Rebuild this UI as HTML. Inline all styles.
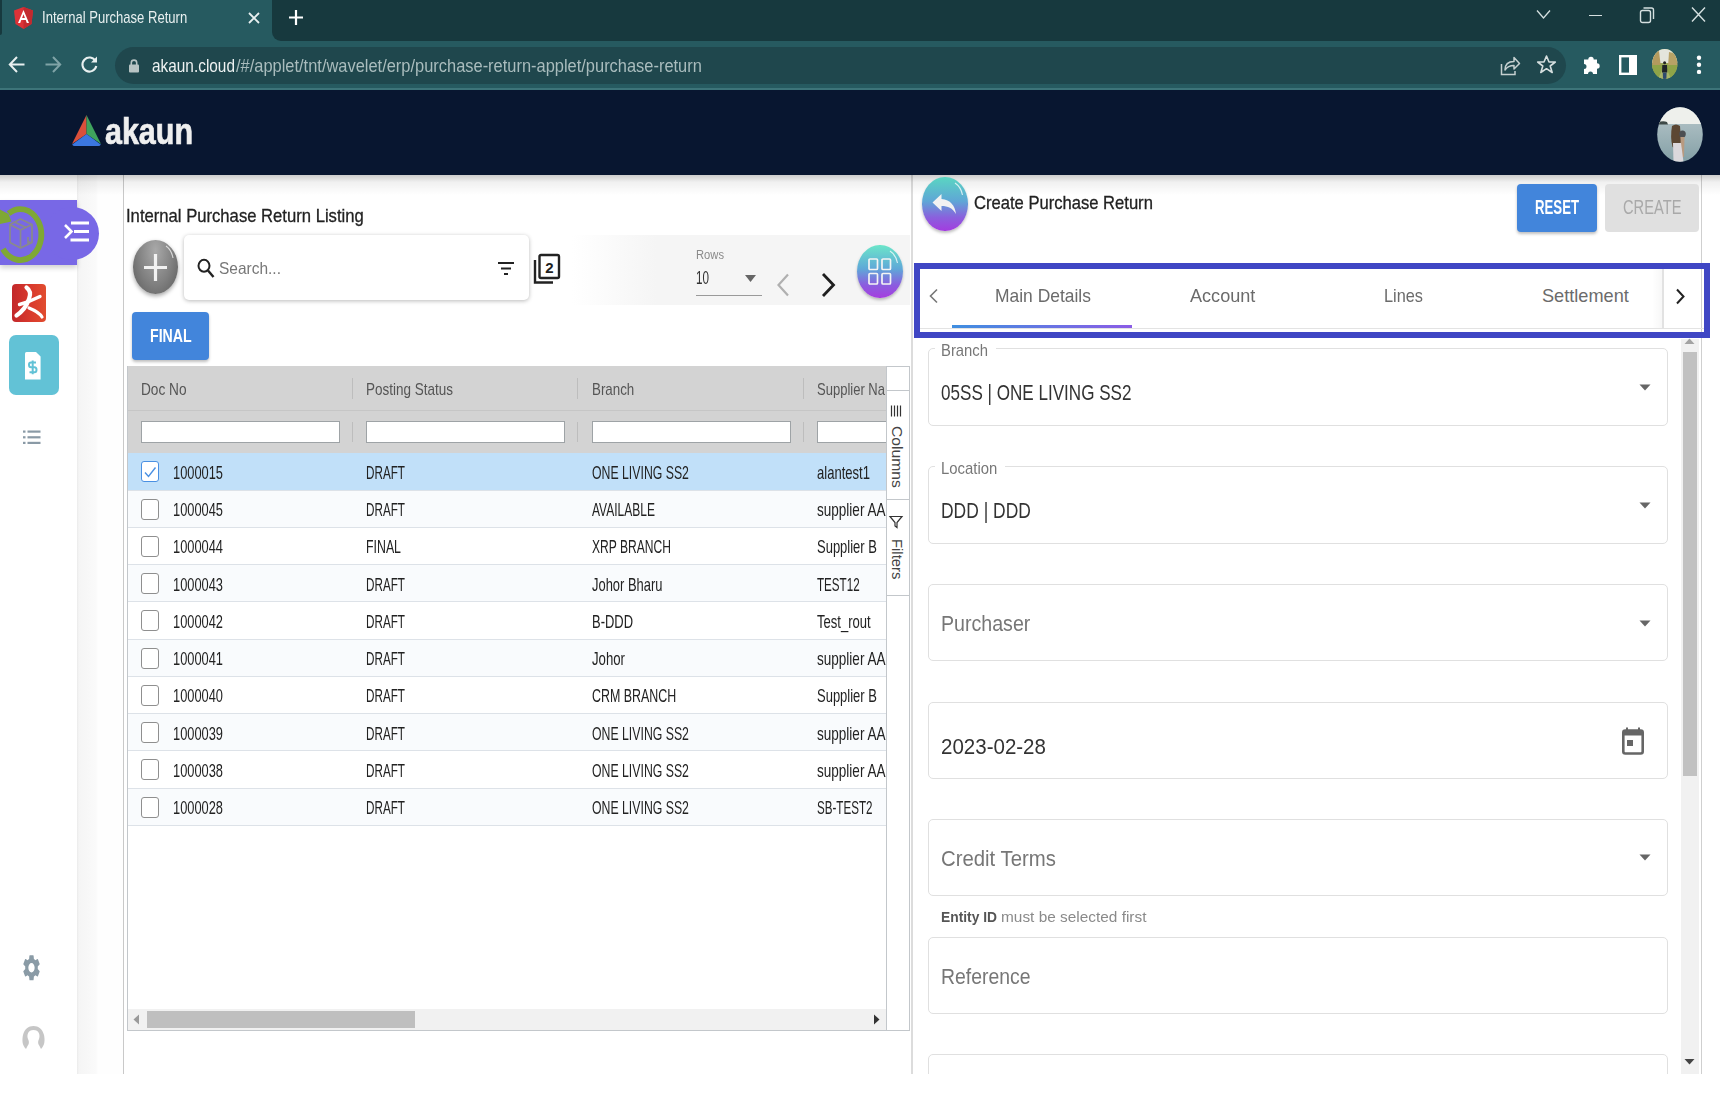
<!DOCTYPE html>
<html><head><meta charset="utf-8"><title>Internal Purchase Return</title>
<style>
html,body{margin:0;padding:0;width:1720px;height:1094px;overflow:hidden;background:#fff;position:relative;font-family:"Liberation Sans",sans-serif}
body>div,body>svg{position:absolute}
.t{white-space:nowrap;transform-origin:0 0}
svg{overflow:visible}
</style></head><body>
<div style="left:0.00px;top:0.00px;width:1720.00px;height:89.00px;background:#265a60"></div>
<div style="left:272px;top:0;width:1448px;height:41px;background:#17393e;border-radius:0 0 0 9px"></div>
<div style="left:0;top:0;width:1.5px;height:35px;background:#17393e;border-radius:0 0 2px 0"></div>
<div style="left:0.00px;top:88.00px;width:1720.00px;height:1.50px;background:#3d7479"></div>
<div style="left:115px;top:47px;width:1451px;height:37px;background:#1f474d;border-radius:19px"></div>
<svg style="left:14px;top:7px" width="19" height="22" viewBox="0 0 19 22"><path d="M9.5 0 L19 3.5 L17.5 17 L9.5 22 L1.5 17 L0 3.5 Z" fill="#dd3237"/><path d="M9.5 0 L19 3.5 L17.5 17 L9.5 22Z" fill="#c3292e"/><path d="M9.5 3 L4 16 H6.2 L7.3 13 H11.7 L12.8 16 H15 Z M8.1 11 L9.5 7.3 L10.9 11Z" fill="#fff"/></svg>
<div class="t" style="left:41.70px;top:9px;font-size:17.15px;line-height:17.15px;color:#e8f0f0;font-weight:400;transform:scaleX(0.7620);">Internal Purchase Return</div>
<svg style="left:248px;top:12px" width="12" height="12" viewBox="0 0 12 12"><path d="M1 1L11 11M11 1L1 11" stroke="#e8f0f0" stroke-width="1.8"/></svg>
<svg style="left:288px;top:9px" width="16" height="17" viewBox="0 0 16 17"><path d="M8 1V16M1 8.5H15" stroke="#fff" stroke-width="2.2"/></svg>
<svg style="left:1536px;top:9px" width="15" height="11" viewBox="0 0 15 11"><path d="M1 1.5L7.5 9L14 1.5" stroke="#d5e0e0" stroke-width="1.3" fill="none"/></svg>
<div style="left:1589.00px;top:14.50px;width:12.50px;height:1.50px;background:#d5e0e0"></div>
<svg style="left:1639px;top:6px" width="16" height="18" viewBox="0 0 16 18"><rect x="1.5" y="4.5" width="10" height="12" rx="2" stroke="#d5e0e0" stroke-width="1.4" fill="none"/><path d="M4.5 2H12.5A2 2 0 0 1 14.5 4V13" stroke="#d5e0e0" stroke-width="1.4" fill="none"/></svg>
<svg style="left:1691px;top:6px" width="15" height="17" viewBox="0 0 15 17"><path d="M1 1.5L14 15.5M14 1.5L1 15.5" stroke="#d5e0e0" stroke-width="1.4"/></svg>
<svg style="left:8px;top:55px" width="18" height="19" viewBox="0 0 18 19"><path d="M16.5 9.5H2M9 2L1.8 9.5L9 17" stroke="#e8f0f0" stroke-width="2" fill="none"/></svg>
<svg style="left:44px;top:55px" width="18" height="19" viewBox="0 0 18 19"><path d="M1.5 9.5H16M9 2L16.2 9.5L9 17" stroke="#7fa3a6" stroke-width="2" fill="none"/></svg>
<svg style="left:80px;top:55px" width="19" height="19" viewBox="0 0 19 19"><path d="M15.5 6A7 7 0 1 0 16.3 11" stroke="#e8f0f0" stroke-width="2.1" fill="none"/><path d="M17 1.5V7.5H11Z" fill="#e8f0f0"/></svg>
<svg style="left:129px;top:58px" width="10" height="15" viewBox="0 0 10 15"><path d="M2.3 7V4.8A2.7 2.7 0 0 1 7.7 4.8V7" stroke="#b8c4c4" stroke-width="1.6" fill="none"/><rect x="0" y="6.5" width="10" height="8" rx="1" fill="#b8c4c4"/></svg>
<div class="t" style="left:152.20px;top:58px;font-size:17.44px;line-height:17.44px;color:#eef2f2;font-weight:400;transform:scaleX(0.8823);">akaun.cloud</div>
<div class="t" style="left:235.50px;top:58px;font-size:17.44px;line-height:17.44px;color:#a9bcbd;font-weight:400;transform:scaleX(0.9424);">/#/applet/tnt/wavelet/erp/purchase-return-applet/purchase-return</div>
<svg style="left:1500px;top:55px" width="21" height="21" viewBox="0 0 21 21"><path d="M1.5 9V19.5H15V16" stroke="#c5d0d0" stroke-width="1.5" fill="none"/><path d="M5 15C5 9 9 6.5 14 6.5V2.5L19.5 8.5L14 14V10.5C10 10.5 7 12 5 15Z" stroke="#c5d0d0" stroke-width="1.5" fill="none" stroke-linejoin="round"/></svg>
<svg style="left:1536px;top:54px" width="21" height="21" viewBox="0 0 21 21"><path d="M10.5 2L13 8H19.3L14.2 12L16.2 18.5L10.5 14.7L4.8 18.5L6.8 12L1.7 8H8Z" stroke="#d5dede" stroke-width="1.6" fill="none" stroke-linejoin="round"/></svg>
<svg style="left:1583px;top:55px" width="18" height="20" viewBox="0 0 18 20"><path d="M1 4.5 H5.3 A2.7 2.7 0 1 1 10.7 4.5 H14 V8.3 A2.7 2.7 0 1 1 14 13.7 V19 H10 A2.5 2.5 0 1 0 5 19 H1 V14 A2.5 2.5 0 1 0 1 9 Z" fill="#fff"/></svg>
<svg style="left:1619px;top:55px" width="18" height="20" viewBox="0 0 18 20"><rect x="1.2" y="1.2" width="15.6" height="17.6" stroke="#fff" stroke-width="2.4" fill="none"/><rect x="10" y="1" width="7" height="18" fill="#fff"/></svg>
<svg style="left:1651.5px;top:49px;filter:blur(0.3px)" width="25.5" height="30" viewBox="0 0 25.5 30"><defs><clipPath id="av2"><ellipse cx="12.75" cy="15" rx="12.6" ry="14.9"/></clipPath></defs><g clip-path="url(#av2)"><rect width="26" height="30" fill="#9aa85a"/><rect width="26" height="14" fill="#e4e5dc"/><path d="M0 4 L7 2 L9 19 L0 20Z" fill="#b39a5e"/><path d="M17 3 L26 5 V20 L16 18Z" fill="#b8a266"/><path d="M0 16 H26 V30 H0Z" fill="#8fa448"/><path d="M6 30 L12 17 L13.5 17 L19 30Z" fill="#a9b56a"/><circle cx="12.6" cy="13.8" r="1.5" fill="#222"/><path d="M10.3 16 H15 L15.3 23.5 H10Z" fill="#1e2328"/><path d="M10.8 23.5 H14.6 L14.4 30 H11Z" fill="#2e4a6e"/></g></svg>
<svg style="left:1696px;top:55px" width="6" height="20" viewBox="0 0 6 20"><circle cx="3" cy="2.7" r="2.2" fill="#fff"/><circle cx="3" cy="9.8" r="2.2" fill="#fff"/><circle cx="3" cy="16.9" r="2.2" fill="#fff"/></svg>
<div style="left:0.00px;top:89.50px;width:1720.00px;height:85.50px;background:#081630"></div>
<svg style="left:71px;top:114px" width="31" height="33" viewBox="0 0 31 33"><path d="M15.5 1 L1 30 L15.5 20Z" fill="#d9503b"/><path d="M15.5 1 L30 30 L15.5 20Z" fill="#3fa35d"/><path d="M1.2 30.5 L15.5 20 L29.8 30.5 Q29 32 27.5 32 H3.5 Q2 32 1.2 30.5Z" fill="#3b77e0"/></svg>
<div class="t" style="left:105.00px;top:113px;font-size:37.00px;line-height:37.00px;color:#efefef;font-weight:700;transform:scaleX(0.8229);-webkit-text-stroke:0.7px #efefef">akaun</div>
<svg style="left:1656.5px;top:106.5px;filter:blur(0.35px)" width="46" height="55" viewBox="0 0 46 55"><defs><clipPath id="av"><ellipse cx="23" cy="27.5" rx="22.8" ry="27.3"/></clipPath><linearGradient id="sea" x1="0" y1="0" x2="0" y2="1"><stop offset="0" stop-color="#b9c8cc"/><stop offset="1" stop-color="#84a0a6"/></linearGradient></defs><g clip-path="url(#av)"><rect width="46" height="55" fill="url(#sea)"/><rect width="46" height="17" fill="#eef0ec"/><path d="M0 15.5 Q6 13.5 10 15 L11 17.5 H0Z" fill="#3e4a48"/><path d="M15 19 Q19 16 23 19 L24.5 40 Q20 43 15.5 40 Q13 30 15 19Z" fill="#5c4733"/><ellipse cx="25.5" cy="27" rx="3.3" ry="3.5" fill="#4d4f52"/><path d="M23.5 30 H27.5 L27 50 H24Z" fill="#b89a80"/><path d="M16 36 H24 L26.5 55 H16.5Z" fill="#dcd8dc"/></g></svg>
<div style="left:0.00px;top:175.00px;width:1720.00px;height:900.00px;background:#fff"></div>
<div style="left:76.50px;top:175.00px;width:46.50px;height:900.00px;background:linear-gradient(90deg,#ebebeb 0px,#f5f5f5 2px,#f8f8f8 12px,#fafafa 19px,#fefefe 21px,#fefefe 100%)"></div>
<div style="left:123.00px;top:175.00px;width:1.20px;height:900.00px;background:#c9c9c9"></div>
<div style="left:911.00px;top:175.00px;width:2.00px;height:900.00px;background:#dcdcdc"></div>
<div style="left:1701.00px;top:175.00px;width:1.20px;height:900.00px;background:#cfcfcf"></div>
<div style="left:0.00px;top:175.00px;width:1720.00px;height:20.00px;background:linear-gradient(180deg,rgba(0,0,0,0.2),rgba(0,0,0,0.06) 35%,rgba(0,0,0,0))"></div>
<div style="left:0;top:200px;width:77px;height:65px;background:#7868e6;box-shadow:0 3px 5px rgba(0,0,0,0.18)"></div>
<div style="left:45px;top:206.5px;width:54px;height:53px;border-radius:50%;background:#7868e6"></div>
<svg style="left:0;top:206px" width="50" height="56" viewBox="0 0 50 56"><path d="M8.5 7.5 A21 25.5 0 1 1 3 43" stroke="#7fa834" stroke-width="5.8" fill="none"/><path d="M0 3.5 L8.5 8 L11.5 15.5 L0 18Z" fill="#7fa834"/><g stroke="#8a8a8a" stroke-width="1.7" fill="none" stroke-linejoin="round"><path d="M10 18.5 L20.5 13 L32 18.5 L32 36.5 L20.5 42 L10 36.5Z"/><path d="M10 18.5 L20.5 24 L32 18.5 M20.5 24 V42"/><path d="M14.5 16 L26 21.5"/><path d="M28 31 V37 L30.5 35.5"/></g></svg>
<svg style="left:63px;top:221px" width="27" height="21" viewBox="0 0 27 21"><path d="M2 4L8.5 10.5L2 17" stroke="#fff" stroke-width="2.6" fill="none"/><path d="M8 2H26M11 10.5H26M7.5 19H26" stroke="#fff" stroke-width="3"/></svg>
<div style="left:12px;top:283.5px;width:34px;height:38px;border-radius:4px;background:linear-gradient(90deg,#c2282b 0%,#d93a2d 55%,#e14d2f 100%)"></div>
<svg style="left:12px;top:283.5px" width="34" height="38" viewBox="0 0 34 38"><g fill="none" stroke="#fff" stroke-linecap="round"><path d="M14.5 3.5 C18 6 19 10 17 15 C15 21 11 27 4.5 31.5" stroke-width="4.2"/><path d="M7.5 20.5 C13 19 21 16 28 12.5" stroke-width="3.4"/><path d="M17 24 C22 26 27 28 30 33" stroke-width="3.2"/></g></svg>
<div style="left:9px;top:335px;width:50px;height:60px;border-radius:7px;background:#62c2d6"></div>
<svg style="left:24.5px;top:351.5px" width="16" height="28" viewBox="0 0 16 28"><path d="M0 1.5 Q0 0 1.5 0 H11 L15.6 4.5 V27.5 H0Z" fill="#fff"/><path d="M11 10.5 H6 Q4 10.5 4 12.8 Q4 15.3 6 15.3 H9.5 Q11.5 15.3 11.5 17.8 Q11.5 20.3 9.5 20.3 H4.5 M7.7 8.5 V22.3" stroke="#62c2d6" stroke-width="2" fill="none"/></svg>
<svg style="left:23px;top:430px" width="18" height="15" viewBox="0 0 18 15"><g fill="#8a9aa6"><rect x="0" y="0.5" width="2.5" height="2.2"/><rect x="0" y="6.2" width="2.5" height="2.2"/><rect x="0" y="11.8" width="2.5" height="2.2"/><rect x="4.5" y="0.5" width="13" height="2.2"/><rect x="4.5" y="6.2" width="13" height="2.2"/><rect x="4.5" y="11.8" width="13" height="2.2"/></g></svg>
<svg style="left:21px;top:951.5px" width="21" height="31.5" viewBox="0 0 24 24" preserveAspectRatio="none"><path fill="#8a9ba6" d="M19.14 12.94c.04-.3.06-.61.06-.94 0-.32-.02-.64-.07-.94l2.03-1.58a.49.49 0 0 0 .12-.61l-1.92-3.32a.488.488 0 0 0-.59-.22l-2.39.96c-.5-.38-1.03-.7-1.62-.94l-.36-2.54a.484.484 0 0 0-.48-.41h-3.84c-.24 0-.43.17-.47.41l-.36 2.54c-.59.24-1.13.57-1.62.94l-2.39-.96c-.22-.08-.47 0-.59.22L2.74 8.87c-.12.21-.08.47.12.61l2.03 1.58c-.05.3-.09.63-.09.94s.02.64.07.94l-2.03 1.58a.49.49 0 0 0-.12.61l1.92 3.32c.12.22.37.29.59.22l2.39-.96c.5.38 1.03.7 1.62.94l.36 2.54c.05.24.24.41.48.41h3.84c.24 0 .44-.17.47-.41l.36-2.54c.59-.24 1.13-.56 1.62-.94l2.39.96c.22.08.47 0 .59-.22l1.92-3.32c.12-.22.07-.47-.12-.61l-2.01-1.58zM12 15.6c-1.98 0-3.6-1.62-3.6-3.6s1.62-3.6 3.6-3.6 3.6 1.62 3.6 3.6-1.62 3.6-3.6 3.6z"/></svg>
<svg style="left:21px;top:1025px" width="25" height="26" viewBox="0 0 25 26"><path d="M5 24 C1 20 1 15 2 10 C3.5 4 7.5 1 12.5 1 C17.5 1 21.5 4 23 10 C24 15 24 20 20 24 L18.5 21 C17 19 16.5 17 18 14 C19.5 10 18 5 12.5 5 C7 5 5.5 10 7 14 C8.5 17 8 19 6.5 21Z" fill="#c6c6c6"/></svg>
<div class="t" style="left:126.00px;top:207px;font-size:18.31px;line-height:18.31px;color:#222;font-weight:400;transform:scaleX(0.9097);-webkit-text-stroke:0.3px #222">Internal Purchase Return Listing</div>
<div style="left:133px;top:240px;width:45px;height:54px;border-radius:50%;background:radial-gradient(ellipse at 50% 20%,#a9a9a9 0%,#808080 55%,#5a5a5a 100%);box-shadow:0 2px 4px rgba(0,0,0,0.35)"></div>
<svg style="left:133px;top:240px" width="45" height="54" viewBox="0 0 45 54"><path d="M33 6 Q38.5 10 40 18" stroke="rgba(255,255,255,0.7)" stroke-width="1.1" fill="none"/></svg>
<svg style="left:143px;top:253px" width="25" height="29" viewBox="0 0 25 29"><path d="M12.5 1V28M1 14.5H24" stroke="#f2f2f2" stroke-width="3.2"/></svg>
<div style="left:184px;top:234.5px;width:345px;height:65px;border-radius:5px;background:#fff;box-shadow:0 1px 4px rgba(0,0,0,0.28)"></div>
<svg style="left:197px;top:258px" width="18" height="20" viewBox="0 0 18 20"><ellipse cx="7" cy="7.8" rx="5.5" ry="6" stroke="#222" stroke-width="2" fill="none"/><path d="M11 12.5L16.5 19" stroke="#222" stroke-width="2.4"/></svg>
<div class="t" style="left:218.50px;top:261px;font-size:16.72px;line-height:16.72px;color:#777;font-weight:400;transform:scaleX(0.9268);">Search...</div>
<svg style="left:497px;top:261px" width="18" height="15" viewBox="0 0 18 15"><path d="M1 2H17M4 7.5H14M7 13H11" stroke="#222" stroke-width="2.2"/></svg>
<svg style="left:533px;top:253px" width="28" height="32" viewBox="0 0 28 32"><path d="M2 7V29.5H20" stroke="#222" stroke-width="2.4" fill="none"/><rect x="6.5" y="2" width="19.5" height="23" rx="1.5" stroke="#222" stroke-width="2.4" fill="none"/><text x="16.3" y="19.5" font-family="Liberation Sans" font-weight="700" font-size="15" fill="#222" text-anchor="middle">2</text></svg>
<div style="left:572.00px;top:235.00px;width:337.50px;height:69.50px;background:linear-gradient(90deg,rgba(245,245,245,0) 0%,#f5f5f5 25%,#f5f5f5 100%)"></div>
<div class="t" style="left:696.00px;top:249px;font-size:12.35px;line-height:12.35px;color:#8a8a8a;font-weight:400;transform:scaleX(0.9063);">Rows</div>
<div class="t" style="left:696.00px;top:269px;font-size:18.17px;line-height:18.17px;color:#333;font-weight:400;transform:scaleX(0.6433);">10</div>
<svg style="left:745px;top:275px" width="11" height="8" viewBox="0 0 11 8"><path d="M0 0H11L5.5 7Z" fill="#666"/></svg>
<div style="left:696.00px;top:294.50px;width:65.50px;height:1.60px;background:#9a9a9a"></div>
<svg style="left:776px;top:273px" width="14" height="24" viewBox="0 0 14 24"><path d="M12 1.5L2.5 12L12 22.5" stroke="#b0b0b0" stroke-width="2.2" fill="none"/></svg>
<svg style="left:821px;top:272px" width="15" height="26" viewBox="0 0 15 26"><path d="M2 2L12.5 13L2 24" stroke="#1e1e1e" stroke-width="2.8" fill="none"/></svg>
<div style="left:857px;top:244.5px;width:45.5px;height:53px;border-radius:50%;background:linear-gradient(180deg,#6be6c9 0%,#5fa8d8 45%,#8a5ddf 75%,#a63ddf 100%);box-shadow:0 2px 3px rgba(0,0,0,0.25)"></div>
<svg style="left:857px;top:244.5px" width="46" height="53" viewBox="0 0 46 53"><path d="M33 6 Q39 10 40.5 18" stroke="rgba(255,255,255,0.75)" stroke-width="1.2" fill="none"/></svg>
<svg style="left:868px;top:257.5px" width="23.5" height="27" viewBox="0 0 23.5 27"><g stroke="#f4f4f4" stroke-width="1.7" fill="none"><rect x="1" y="1" width="8.5" height="10.5" rx="1"/><rect x="14" y="1" width="8.5" height="10.5" rx="1"/><rect x="1" y="15.5" width="8.5" height="10.5" rx="1"/><rect x="14" y="15.5" width="8.5" height="10.5" rx="1"/></g></svg>
<div style="left:132px;top:312px;width:77px;height:48px;border-radius:4px;background:#4285db;box-shadow:0 2px 3px rgba(0,0,0,0.25)"></div>
<div class="t" style="left:150.00px;top:327px;font-size:18.02px;line-height:18.02px;color:#fff;font-weight:700;transform:scaleX(0.7859);">FINAL</div>
<div style="left:126.50px;top:366.00px;width:783.00px;height:665.00px;background:#fff;border:1px solid #c3c7cb;box-sizing:border-box"></div>
<div style="left:127.50px;top:366.00px;width:758.00px;height:87.00px;background:#d3d3d3"></div>
<div style="left:127.50px;top:410.00px;width:758.00px;height:1.30px;background:#c6c6c6"></div>
<div class="t" style="left:141.00px;top:382px;font-size:15.99px;line-height:15.99px;color:#555;font-weight:400;transform:scaleX(0.8553);">Doc No</div>
<div class="t" style="left:366.00px;top:382px;font-size:15.99px;line-height:15.99px;color:#555;font-weight:400;transform:scaleX(0.8439);">Posting Status</div>
<div class="t" style="left:591.50px;top:382px;font-size:15.99px;line-height:15.99px;color:#555;font-weight:400;transform:scaleX(0.8350);">Branch</div>
<div class="t" style="left:817.00px;top:382px;font-size:15.99px;line-height:15.99px;color:#555;font-weight:400;transform:scaleX(0.8139);">Supplier Na</div>
<div style="left:351.50px;top:378.00px;width:1.20px;height:21.00px;background:#bdbdbd"></div>
<div style="left:351.50px;top:421.50px;width:1.20px;height:20.00px;background:#bdbdbd"></div>
<div style="left:577.00px;top:378.00px;width:1.20px;height:21.00px;background:#bdbdbd"></div>
<div style="left:577.00px;top:421.50px;width:1.20px;height:20.00px;background:#bdbdbd"></div>
<div style="left:802.50px;top:378.00px;width:1.20px;height:21.00px;background:#bdbdbd"></div>
<div style="left:802.50px;top:421.50px;width:1.20px;height:20.00px;background:#bdbdbd"></div>
<div style="left:141.00px;top:420.50px;width:199.00px;height:22.00px;background:#fff;border:1px solid #9ea3a6;box-sizing:border-box"></div>
<div style="left:366.00px;top:420.50px;width:199.00px;height:22.00px;background:#fff;border:1px solid #9ea3a6;box-sizing:border-box"></div>
<div style="left:591.50px;top:420.50px;width:199.00px;height:22.00px;background:#fff;border:1px solid #9ea3a6;box-sizing:border-box"></div>
<div style="left:817.00px;top:420.50px;width:80.00px;height:22.00px;background:#fff;border:1px solid #9ea3a6;box-sizing:border-box"></div>
<div style="left:127.50px;top:453.40px;width:758.00px;height:37.25px;background:#c1e0f9"></div>
<div style="left:127.50px;top:489.65px;width:758.00px;height:1.00px;background:#dde2e8"></div>
<div style="left:141.00px;top:461.40px;width:18.00px;height:21.00px;border:1.4px solid #4a90e2;border-radius:3px;background:#fff;box-sizing:border-box"></div>
<svg style="left:143px;top:465.40px" width="14" height="14" viewBox="0 0 14 14"><path d="M2 7.5L5.5 11.5L12.5 2.5" stroke="#4a90e2" stroke-width="1.4" fill="none"/></svg>
<div class="t" style="left:172.50px;top:465px;font-size:17.73px;line-height:17.73px;color:#222;font-weight:400;transform:scaleX(0.7243);">1000015</div>
<div class="t" style="left:366.00px;top:465px;font-size:17.73px;line-height:17.73px;color:#222;font-weight:400;transform:scaleX(0.6598);">DRAFT</div>
<div class="t" style="left:591.50px;top:465px;font-size:17.73px;line-height:17.73px;color:#222;font-weight:400;transform:scaleX(0.6932);">ONE LIVING SS2</div>
<div class="t" style="left:817.00px;top:465px;font-size:17.73px;line-height:17.73px;color:#222;font-weight:400;transform:scaleX(0.7364);">alantest1</div>
<div style="left:127.50px;top:490.65px;width:758.00px;height:37.25px;background:#f9fbfd"></div>
<div style="left:127.50px;top:526.90px;width:758.00px;height:1.00px;background:#dde2e8"></div>
<div style="left:141.00px;top:498.65px;width:18.00px;height:21.00px;border:1.4px solid #8f8f8f;border-radius:3px;background:#fff;box-sizing:border-box"></div>
<div class="t" style="left:172.50px;top:502px;font-size:17.73px;line-height:17.73px;color:#222;font-weight:400;transform:scaleX(0.7243);">1000045</div>
<div class="t" style="left:366.00px;top:502px;font-size:17.73px;line-height:17.73px;color:#222;font-weight:400;transform:scaleX(0.6598);">DRAFT</div>
<div class="t" style="left:591.50px;top:502px;font-size:17.73px;line-height:17.73px;color:#222;font-weight:400;transform:scaleX(0.6775);">AVAILABLE</div>
<div class="t" style="left:817.00px;top:502px;font-size:17.73px;line-height:17.73px;color:#222;font-weight:400;transform:scaleX(0.7636);">supplier AA</div>
<div style="left:127.50px;top:527.90px;width:758.00px;height:37.25px;background:#fff"></div>
<div style="left:127.50px;top:564.15px;width:758.00px;height:1.00px;background:#dde2e8"></div>
<div style="left:141.00px;top:535.90px;width:18.00px;height:21.00px;border:1.4px solid #8f8f8f;border-radius:3px;background:#fff;box-sizing:border-box"></div>
<div class="t" style="left:172.50px;top:539px;font-size:17.73px;line-height:17.73px;color:#222;font-weight:400;transform:scaleX(0.7243);">1000044</div>
<div class="t" style="left:366.00px;top:539px;font-size:17.73px;line-height:17.73px;color:#222;font-weight:400;transform:scaleX(0.6964);">FINAL</div>
<div class="t" style="left:591.50px;top:539px;font-size:17.73px;line-height:17.73px;color:#222;font-weight:400;transform:scaleX(0.6813);">XRP BRANCH</div>
<div class="t" style="left:817.00px;top:539px;font-size:17.73px;line-height:17.73px;color:#222;font-weight:400;transform:scaleX(0.7333);">Supplier B</div>
<div style="left:127.50px;top:565.15px;width:758.00px;height:37.25px;background:#f9fbfd"></div>
<div style="left:127.50px;top:601.40px;width:758.00px;height:1.00px;background:#dde2e8"></div>
<div style="left:141.00px;top:573.15px;width:18.00px;height:21.00px;border:1.4px solid #8f8f8f;border-radius:3px;background:#fff;box-sizing:border-box"></div>
<div class="t" style="left:172.50px;top:577px;font-size:17.73px;line-height:17.73px;color:#222;font-weight:400;transform:scaleX(0.7243);">1000043</div>
<div class="t" style="left:366.00px;top:577px;font-size:17.73px;line-height:17.73px;color:#222;font-weight:400;transform:scaleX(0.6598);">DRAFT</div>
<div class="t" style="left:591.50px;top:577px;font-size:17.73px;line-height:17.73px;color:#222;font-weight:400;transform:scaleX(0.7298);">Johor Bharu</div>
<div class="t" style="left:817.00px;top:577px;font-size:17.73px;line-height:17.73px;color:#222;font-weight:400;transform:scaleX(0.6565);">TEST12</div>
<div style="left:127.50px;top:602.40px;width:758.00px;height:37.25px;background:#fff"></div>
<div style="left:127.50px;top:638.65px;width:758.00px;height:1.00px;background:#dde2e8"></div>
<div style="left:141.00px;top:610.40px;width:18.00px;height:21.00px;border:1.4px solid #8f8f8f;border-radius:3px;background:#fff;box-sizing:border-box"></div>
<div class="t" style="left:172.50px;top:614px;font-size:17.73px;line-height:17.73px;color:#222;font-weight:400;transform:scaleX(0.7243);">1000042</div>
<div class="t" style="left:366.00px;top:614px;font-size:17.73px;line-height:17.73px;color:#222;font-weight:400;transform:scaleX(0.6598);">DRAFT</div>
<div class="t" style="left:591.50px;top:614px;font-size:17.73px;line-height:17.73px;color:#222;font-weight:400;transform:scaleX(0.7302);">B-DDD</div>
<div class="t" style="left:817.00px;top:614px;font-size:17.73px;line-height:17.73px;color:#222;font-weight:400;transform:scaleX(0.7362);">Test_rout</div>
<div style="left:127.50px;top:639.65px;width:758.00px;height:37.25px;background:#f9fbfd"></div>
<div style="left:127.50px;top:675.90px;width:758.00px;height:1.00px;background:#dde2e8"></div>
<div style="left:141.00px;top:647.65px;width:18.00px;height:21.00px;border:1.4px solid #8f8f8f;border-radius:3px;background:#fff;box-sizing:border-box"></div>
<div class="t" style="left:172.50px;top:651px;font-size:17.73px;line-height:17.73px;color:#222;font-weight:400;transform:scaleX(0.7243);">1000041</div>
<div class="t" style="left:366.00px;top:651px;font-size:17.73px;line-height:17.73px;color:#222;font-weight:400;transform:scaleX(0.6598);">DRAFT</div>
<div class="t" style="left:591.50px;top:651px;font-size:17.73px;line-height:17.73px;color:#222;font-weight:400;transform:scaleX(0.7439);">Johor</div>
<div class="t" style="left:817.00px;top:651px;font-size:17.73px;line-height:17.73px;color:#222;font-weight:400;transform:scaleX(0.7636);">supplier AA</div>
<div style="left:127.50px;top:676.90px;width:758.00px;height:37.25px;background:#fff"></div>
<div style="left:127.50px;top:713.15px;width:758.00px;height:1.00px;background:#dde2e8"></div>
<div style="left:141.00px;top:684.90px;width:18.00px;height:21.00px;border:1.4px solid #8f8f8f;border-radius:3px;background:#fff;box-sizing:border-box"></div>
<div class="t" style="left:172.50px;top:688px;font-size:17.73px;line-height:17.73px;color:#222;font-weight:400;transform:scaleX(0.7243);">1000040</div>
<div class="t" style="left:366.00px;top:688px;font-size:17.73px;line-height:17.73px;color:#222;font-weight:400;transform:scaleX(0.6598);">DRAFT</div>
<div class="t" style="left:591.50px;top:688px;font-size:17.73px;line-height:17.73px;color:#222;font-weight:400;transform:scaleX(0.7022);">CRM BRANCH</div>
<div class="t" style="left:817.00px;top:688px;font-size:17.73px;line-height:17.73px;color:#222;font-weight:400;transform:scaleX(0.7333);">Supplier B</div>
<div style="left:127.50px;top:714.15px;width:758.00px;height:37.25px;background:#f9fbfd"></div>
<div style="left:127.50px;top:750.40px;width:758.00px;height:1.00px;background:#dde2e8"></div>
<div style="left:141.00px;top:722.15px;width:18.00px;height:21.00px;border:1.4px solid #8f8f8f;border-radius:3px;background:#fff;box-sizing:border-box"></div>
<div class="t" style="left:172.50px;top:726px;font-size:17.73px;line-height:17.73px;color:#222;font-weight:400;transform:scaleX(0.7243);">1000039</div>
<div class="t" style="left:366.00px;top:726px;font-size:17.73px;line-height:17.73px;color:#222;font-weight:400;transform:scaleX(0.6598);">DRAFT</div>
<div class="t" style="left:591.50px;top:726px;font-size:17.73px;line-height:17.73px;color:#222;font-weight:400;transform:scaleX(0.6932);">ONE LIVING SS2</div>
<div class="t" style="left:817.00px;top:726px;font-size:17.73px;line-height:17.73px;color:#222;font-weight:400;transform:scaleX(0.7636);">supplier AA</div>
<div style="left:127.50px;top:751.40px;width:758.00px;height:37.25px;background:#fff"></div>
<div style="left:127.50px;top:787.65px;width:758.00px;height:1.00px;background:#dde2e8"></div>
<div style="left:141.00px;top:759.40px;width:18.00px;height:21.00px;border:1.4px solid #8f8f8f;border-radius:3px;background:#fff;box-sizing:border-box"></div>
<div class="t" style="left:172.50px;top:763px;font-size:17.73px;line-height:17.73px;color:#222;font-weight:400;transform:scaleX(0.7243);">1000038</div>
<div class="t" style="left:366.00px;top:763px;font-size:17.73px;line-height:17.73px;color:#222;font-weight:400;transform:scaleX(0.6598);">DRAFT</div>
<div class="t" style="left:591.50px;top:763px;font-size:17.73px;line-height:17.73px;color:#222;font-weight:400;transform:scaleX(0.6932);">ONE LIVING SS2</div>
<div class="t" style="left:817.00px;top:763px;font-size:17.73px;line-height:17.73px;color:#222;font-weight:400;transform:scaleX(0.7636);">supplier AA</div>
<div style="left:127.50px;top:788.65px;width:758.00px;height:37.25px;background:#f9fbfd"></div>
<div style="left:127.50px;top:824.90px;width:758.00px;height:1.00px;background:#dde2e8"></div>
<div style="left:141.00px;top:796.65px;width:18.00px;height:21.00px;border:1.4px solid #8f8f8f;border-radius:3px;background:#fff;box-sizing:border-box"></div>
<div class="t" style="left:172.50px;top:800px;font-size:17.73px;line-height:17.73px;color:#222;font-weight:400;transform:scaleX(0.7243);">1000028</div>
<div class="t" style="left:366.00px;top:800px;font-size:17.73px;line-height:17.73px;color:#222;font-weight:400;transform:scaleX(0.6598);">DRAFT</div>
<div class="t" style="left:591.50px;top:800px;font-size:17.73px;line-height:17.73px;color:#222;font-weight:400;transform:scaleX(0.6932);">ONE LIVING SS2</div>
<div class="t" style="left:817.00px;top:800px;font-size:17.73px;line-height:17.73px;color:#222;font-weight:400;transform:scaleX(0.6549);">SB-TEST2</div>
<div style="left:885.50px;top:367.00px;width:23.00px;height:663.00px;background:#fff;border-left:1px solid #c3c7cb;box-sizing:border-box"></div>
<div style="left:885.50px;top:389.50px;width:23.00px;height:1.00px;background:#c3c7cb"></div>
<div style="left:885.50px;top:498.80px;width:23.00px;height:1.00px;background:#c3c7cb"></div>
<div style="left:885.50px;top:594.60px;width:23.00px;height:1.00px;background:#c3c7cb"></div>
<svg style="left:890px;top:405px" width="12" height="12" viewBox="0 0 12 12"><path d="M1.5 0.5V11.5M4.5 0.5V11.5M7.5 0.5V11.5M10.5 0.5V11.5" stroke="#333" stroke-width="1.2"/></svg>
<div class="t" style="left:896px;top:426px;font-size:14px;line-height:14px;color:#444;transform-origin:0 0;transform:rotate(90deg) scaleX(1.12) translateY(-7.5px)">Columns</div>
<svg style="left:889px;top:515px" width="14" height="14" viewBox="0 0 14 14"><path d="M1 1.5H13L8 7.5V12.5L6 11V7.5Z" stroke="#333" stroke-width="1.2" fill="none"/></svg>
<div class="t" style="left:896px;top:539px;font-size:14px;line-height:14px;color:#444;transform-origin:0 0;transform:rotate(90deg) scaleX(1.06) translateY(-7.5px)">Filters</div>
<div style="left:127.50px;top:1008.50px;width:758.00px;height:22.00px;background:#f1f1f1"></div>
<div style="left:146.50px;top:1011.00px;width:268.50px;height:17.00px;background:#bfbfbf"></div>
<svg style="left:133px;top:1014px" width="7" height="11" viewBox="0 0 7 11"><path d="M6 0.5V10.5L0.5 5.5Z" fill="#9a9a9a"/></svg>
<svg style="left:872.5px;top:1014px" width="7" height="11" viewBox="0 0 7 11"><path d="M1 0.5V10.5L6.5 5.5Z" fill="#333"/></svg>
<div style="left:127.00px;top:1030.00px;width:783.00px;height:1.00px;background:#c3c7cb"></div>
<div style="left:922px;top:177px;width:45.5px;height:53.5px;border-radius:50%;background:linear-gradient(180deg,#5ad6c2 0%,#5fa6d6 45%,#8a60dd 75%,#a33cdf 100%);box-shadow:0 2px 3px rgba(0,0,0,0.25)"></div>
<svg style="left:932px;top:193px" width="25" height="22" viewBox="0 0 25 22"><path d="M9.5 1 L0.5 9.5 L9.5 18 V13 C16 13 20.5 15 24 21 C23 13 18.5 6.5 9.5 6Z" fill="#f2f2f2"/></svg>
<svg style="left:922px;top:177px" width="46" height="54" viewBox="0 0 46 54"><path d="M33 6 Q39 10 40.5 18" stroke="rgba(255,255,255,0.75)" stroke-width="1.2" fill="none"/></svg>
<div class="t" style="left:974.00px;top:194px;font-size:18.17px;line-height:18.17px;color:#222;font-weight:400;transform:scaleX(0.9136);-webkit-text-stroke:0.3px #222">Create Purchase Return</div>
<div style="left:1517px;top:184px;width:80px;height:48px;border-radius:4px;background:#4285db;box-shadow:0 2px 3px rgba(0,0,0,0.25)"></div>
<div class="t" style="left:1535.00px;top:197px;font-size:20.35px;line-height:20.35px;color:#fff;font-weight:700;transform:scaleX(0.6485);">RESET</div>
<div style="left:1605px;top:184px;width:94px;height:47.5px;border-radius:4px;background:#e0e0e0"></div>
<div class="t" style="left:1622.50px;top:197px;font-size:20.35px;line-height:20.35px;color:#a9a9a9;font-weight:400;transform:scaleX(0.7219);">CREATE</div>
<div style="left:914.00px;top:263.00px;width:796.00px;height:75.00px;border:6px solid #3f46c4;box-sizing:border-box"></div>
<svg style="left:928px;top:288px" width="11" height="16" viewBox="0 0 11 16"><path d="M9 1.5L2.5 8L9 14.5" stroke="#777" stroke-width="1.6" fill="none"/></svg>
<div class="t" style="left:994.50px;top:287px;font-size:18.17px;line-height:18.17px;color:#6b6b6b;font-weight:400;transform:scaleX(0.9603);">Main Details</div>
<div class="t" style="left:1190.00px;top:287px;font-size:18.17px;line-height:18.17px;color:#6b6b6b;font-weight:400;transform:scaleX(0.9962);">Account</div>
<div class="t" style="left:1384.00px;top:287px;font-size:18.17px;line-height:18.17px;color:#6b6b6b;font-weight:400;transform:scaleX(0.8979);">Lines</div>
<div class="t" style="left:1542.00px;top:287px;font-size:18.17px;line-height:18.17px;color:#6b6b6b;font-weight:400;">Settlement</div>
<div style="left:951.9px;top:325.3px;width:180.6px;height:2.6px;background:linear-gradient(90deg,#3f8fe0,#8b5ce6)"></div>
<div style="left:920.00px;top:328.00px;width:784.00px;height:1.20px;background:#e3e3e3"></div>
<div style="left:1652.00px;top:269.00px;width:10.00px;height:59.00px;background:linear-gradient(90deg,rgba(0,0,0,0),rgba(0,0,0,0.03))"></div>
<div style="left:1662.00px;top:269.00px;width:1.50px;height:60.00px;background:#e2e2e2"></div>
<svg style="left:1675px;top:288px" width="11" height="17" viewBox="0 0 11 17"><path d="M2 1.5L8.5 8.5L2 15.5" stroke="#222" stroke-width="2" fill="none"/></svg>
<div style="left:1681.00px;top:339.00px;width:18.00px;height:736.00px;background:#f1f1f1"></div>
<div style="left:1683.00px;top:351.50px;width:14.00px;height:424.50px;background:#c1c1c1"></div>
<svg style="left:1684px;top:337px" width="11" height="8" viewBox="0 0 11 8"><path d="M0.5 7H10.5L5.5 1.5Z" fill="#a3a3a3"/></svg>
<svg style="left:1684px;top:1058px" width="11" height="8" viewBox="0 0 11 8"><path d="M0.5 1H10.5L5.5 6.5Z" fill="#444"/></svg>
<div style="left:927.50px;top:348.30px;width:740.50px;height:77.30px;border:1px solid #e0e0e0;border-radius:5px;box-sizing:border-box;background:#fff"></div>
<div style="left:934.50px;top:345.30px;width:61.00px;height:7.00px;background:#fff"></div>
<div class="t" style="left:940.80px;top:343px;font-size:15.70px;line-height:15.70px;color:#777;font-weight:400;transform:scaleX(0.9449);">Branch</div>
<div class="t" style="left:941.00px;top:383px;font-size:21.51px;line-height:21.51px;color:#333;font-weight:400;transform:scaleX(0.7944);">05SS | ONE LIVING SS2</div>
<svg style="left:1638.5px;top:383.80px" width="12" height="7" viewBox="0 0 12 7"><path d="M0.5 0.5H11.5L6 6.5Z" fill="#666"/></svg>
<div style="left:927.50px;top:466.30px;width:740.50px;height:77.30px;border:1px solid #e0e0e0;border-radius:5px;box-sizing:border-box;background:#fff"></div>
<div style="left:934.50px;top:463.30px;width:70.30px;height:7.00px;background:#fff"></div>
<div class="t" style="left:940.80px;top:461px;font-size:15.70px;line-height:15.70px;color:#777;font-weight:400;transform:scaleX(0.9486);">Location</div>
<div class="t" style="left:941.00px;top:501px;font-size:21.51px;line-height:21.51px;color:#333;font-weight:400;transform:scaleX(0.8126);">DDD | DDD</div>
<svg style="left:1638.5px;top:501.80px" width="12" height="7" viewBox="0 0 12 7"><path d="M0.5 0.5H11.5L6 6.5Z" fill="#666"/></svg>
<div style="left:927.50px;top:584.00px;width:740.50px;height:77.30px;border:1px solid #e0e0e0;border-radius:5px;box-sizing:border-box;background:#fff"></div>
<div class="t" style="left:941.00px;top:614px;font-size:21.51px;line-height:21.51px;color:#777;font-weight:400;transform:scaleX(0.9118);">Purchaser</div>
<svg style="left:1638.5px;top:619.50px" width="12" height="7" viewBox="0 0 12 7"><path d="M0.5 0.5H11.5L6 6.5Z" fill="#666"/></svg>
<div style="left:927.50px;top:701.50px;width:740.50px;height:77.30px;border:1px solid #e0e0e0;border-radius:5px;box-sizing:border-box;background:#fff"></div>
<div class="t" style="left:941.00px;top:737px;font-size:21.51px;line-height:21.51px;color:#333;font-weight:400;transform:scaleX(0.9542);">2023-02-28</div>
<svg style="left:1621.5px;top:727.00px" width="22" height="28" viewBox="0 0 22 28"><path d="M5 0.5V4M17 0.5V4" stroke="#666" stroke-width="2"/><rect x="1.3" y="3.5" width="19.4" height="23" rx="2" stroke="#666" stroke-width="2.6" fill="none"/><rect x="1.3" y="3.5" width="19.4" height="5" fill="#666"/><rect x="5" y="13" width="6" height="6" fill="#666"/></svg>
<div style="left:927.50px;top:818.80px;width:740.50px;height:77.30px;border:1px solid #e0e0e0;border-radius:5px;box-sizing:border-box;background:#fff"></div>
<div class="t" style="left:941.00px;top:849px;font-size:21.51px;line-height:21.51px;color:#777;font-weight:400;transform:scaleX(0.9463);">Credit Terms</div>
<svg style="left:1638.5px;top:854.30px" width="12" height="7" viewBox="0 0 12 7"><path d="M0.5 0.5H11.5L6 6.5Z" fill="#666"/></svg>
<div class="t" style="left:940.50px;top:910px;font-size:14.97px;line-height:14.97px;color:#555;font-weight:700;transform:scaleX(0.9223);">Entity ID</div>
<div class="t" style="left:1000.50px;top:910px;font-size:14.97px;line-height:14.97px;color:#8a8a8a;font-weight:400;transform:scaleX(1.0286);">must be selected first</div>
<div style="left:927.50px;top:936.80px;width:740.50px;height:77.30px;border:1px solid #e0e0e0;border-radius:5px;box-sizing:border-box;background:#fff"></div>
<div class="t" style="left:941.00px;top:967px;font-size:21.51px;line-height:21.51px;color:#777;font-weight:400;transform:scaleX(0.9027);">Reference</div>
<div style="left:927.50px;top:1053.80px;width:740.50px;height:60.00px;border:1px solid #e0e0e0;border-radius:5px;box-sizing:border-box;background:#fff"></div>
<div style="left:0.00px;top:1074.00px;width:1720.00px;height:20.00px;background:#fff"></div>
</body></html>
